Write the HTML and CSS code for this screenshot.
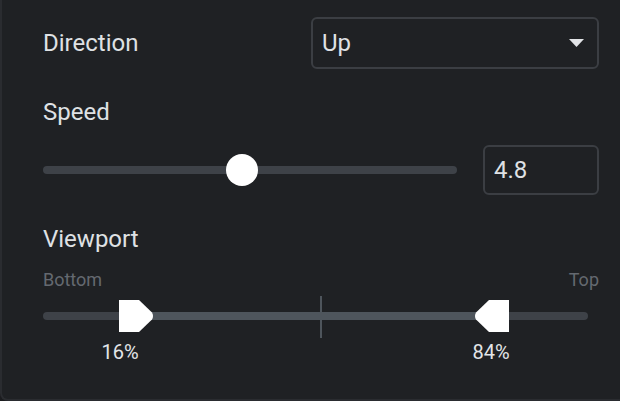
FILE: index.html
```html
<!DOCTYPE html>
<html lang="en">
<head>
<meta charset="utf-8">
<title>Motion effects</title>
<link rel="stylesheet" href="styles.css">
</head>
<body>
<div class="panel">
  <div class="row row-direction">
    <span class="label">Direction</span>
    <div class="select">
      <span class="select-value">Up</span>
      <svg class="caret" width="15" height="8" viewBox="0 0 15 8"><polygon points="0,0 15,0 7.5,8" fill="#e2e4e7"/></svg>
    </div>
  </div>

  <div class="label label-speed">Speed</div>
  <div class="row row-speed">
    <div class="slider">
      <div class="slider-track"></div>
      <div class="slider-thumb" style="left:48%"></div>
    </div>
    <div class="number">4.8</div>
  </div>

  <div class="label label-viewport">Viewport</div>
  <div class="ends"><span>Bottom</span><span>Top</span></div>
  <div class="range">
    <div class="range-track"></div>
    <div class="range-fill"></div>
    <div class="range-tick"></div>
    <svg class="handle handle-start" width="34" height="32" viewBox="0 0 34 32"><path d="M0 0 H20 L33 12.5 Q34 14 34 16 Q34 18 33 19.5 L20 32 H0 Z" fill="#ffffff"/></svg>
    <svg class="handle handle-end" width="35" height="32" viewBox="0 0 35 32"><path d="M35 0 H15 L2 12.5 Q1 14 1 16 Q1 18 2 19.5 L15 32 H35 Z" fill="#ffffff"/></svg>
  </div>
  <div class="range-values">
    <span class="value value-start">16%</span>
    <span class="value value-end">84%</span>
  </div>
</div>
</body>
</html>
```

FILE: styles.css
```css
html, body {
  margin: 0;
  padding: 0;
}

body {
  background: #1b1c1f;
  font-family: Roboto, "Liberation Sans", Arial, sans-serif;
  color: #dfe1e4;
  width: 620px;
  height: 401px;
  overflow: hidden;
}

.panel {
  box-sizing: border-box;
  height: 401px;
  background: #1f2124;
  border-left: 2px solid #2a2c30;
  border-bottom: 2px solid #2a2c30;
  border-bottom-left-radius: 8px;
  padding: 17px 21px 0 41px;
  display: flex;
  flex-direction: column;
}

.label {
  font-size: 24px;
  line-height: 28px;
  color: #dfe1e4;
}

.row {
  display: flex;
  align-items: center;
}

.row-direction {
  height: 52px;
}

.row-direction .label {
  flex: 1;
}

.select {
  box-sizing: border-box;
  width: 288px;
  height: 52px;
  border: 2px solid #3b3e43;
  border-radius: 6px;
  display: flex;
  align-items: center;
  padding: 0 13px 0 9px;
}

.select-value {
  flex: 1;
  font-size: 24px;
  line-height: 28px;
  color: #dfe1e4;
}

.caret {
  display: block;
  margin-top: 0;
}

.label-speed {
  margin-top: 29px;
}

.row-speed {
  margin-top: 19px;
  height: 50px;
  gap: 26px;
}

.slider {
  flex: 1;
  position: relative;
  height: 32px;
}

.slider-track {
  position: absolute;
  left: 0;
  right: 0;
  top: 12px;
  height: 8px;
  border-radius: 4px;
  background: #3e4248;
}

.slider-thumb {
  position: absolute;
  top: 0;
  width: 32px;
  height: 32px;
  margin-left: -16px;
  border-radius: 50%;
  background: #ffffff;
}

.number {
  box-sizing: border-box;
  width: 116px;
  height: 50px;
  border: 2px solid #3b3e43;
  border-radius: 6px;
  padding: 0 9px;
  display: flex;
  align-items: center;
  font-size: 24px;
  line-height: 28px;
  color: #dfe1e4;
}

.label-viewport {
  margin-top: 30px;
}

.ends {
  margin-top: 16px;
  display: flex;
  justify-content: space-between;
  font-size: 18px;
  line-height: 21px;
  color: #646970;
}

.range {
  position: relative;
  margin-top: 6px;
  margin-right: 11px;
  height: 42px;
}

.range-track {
  position: absolute;
  left: 0;
  right: 0;
  top: 16px;
  height: 8px;
  border-radius: 4px;
  background: #3e4248;
}

.range-fill {
  position: absolute;
  left: 90px;
  width: 350px;
  top: 16px;
  height: 8px;
  background: #4e555c;
}

.range-tick {
  position: absolute;
  left: 277px;
  top: 0;
  width: 2px;
  height: 42px;
  background: #4e555c;
}

.handle {
  position: absolute;
  top: 4px;
  display: block;
}

.handle-start {
  left: 76px;
}

.handle-end {
  left: 431px;
}

.range-values {
  position: relative;
  margin-top: 2px;
  height: 24px;
  font-size: 20px;
  line-height: 24px;
  color: #e3e5e8;
}

.value {
  position: absolute;
  top: 0;
  transform: translateX(-50%);
}

.value-start {
  left: 77px;
}

.value-end {
  left: 448px;
}
```
